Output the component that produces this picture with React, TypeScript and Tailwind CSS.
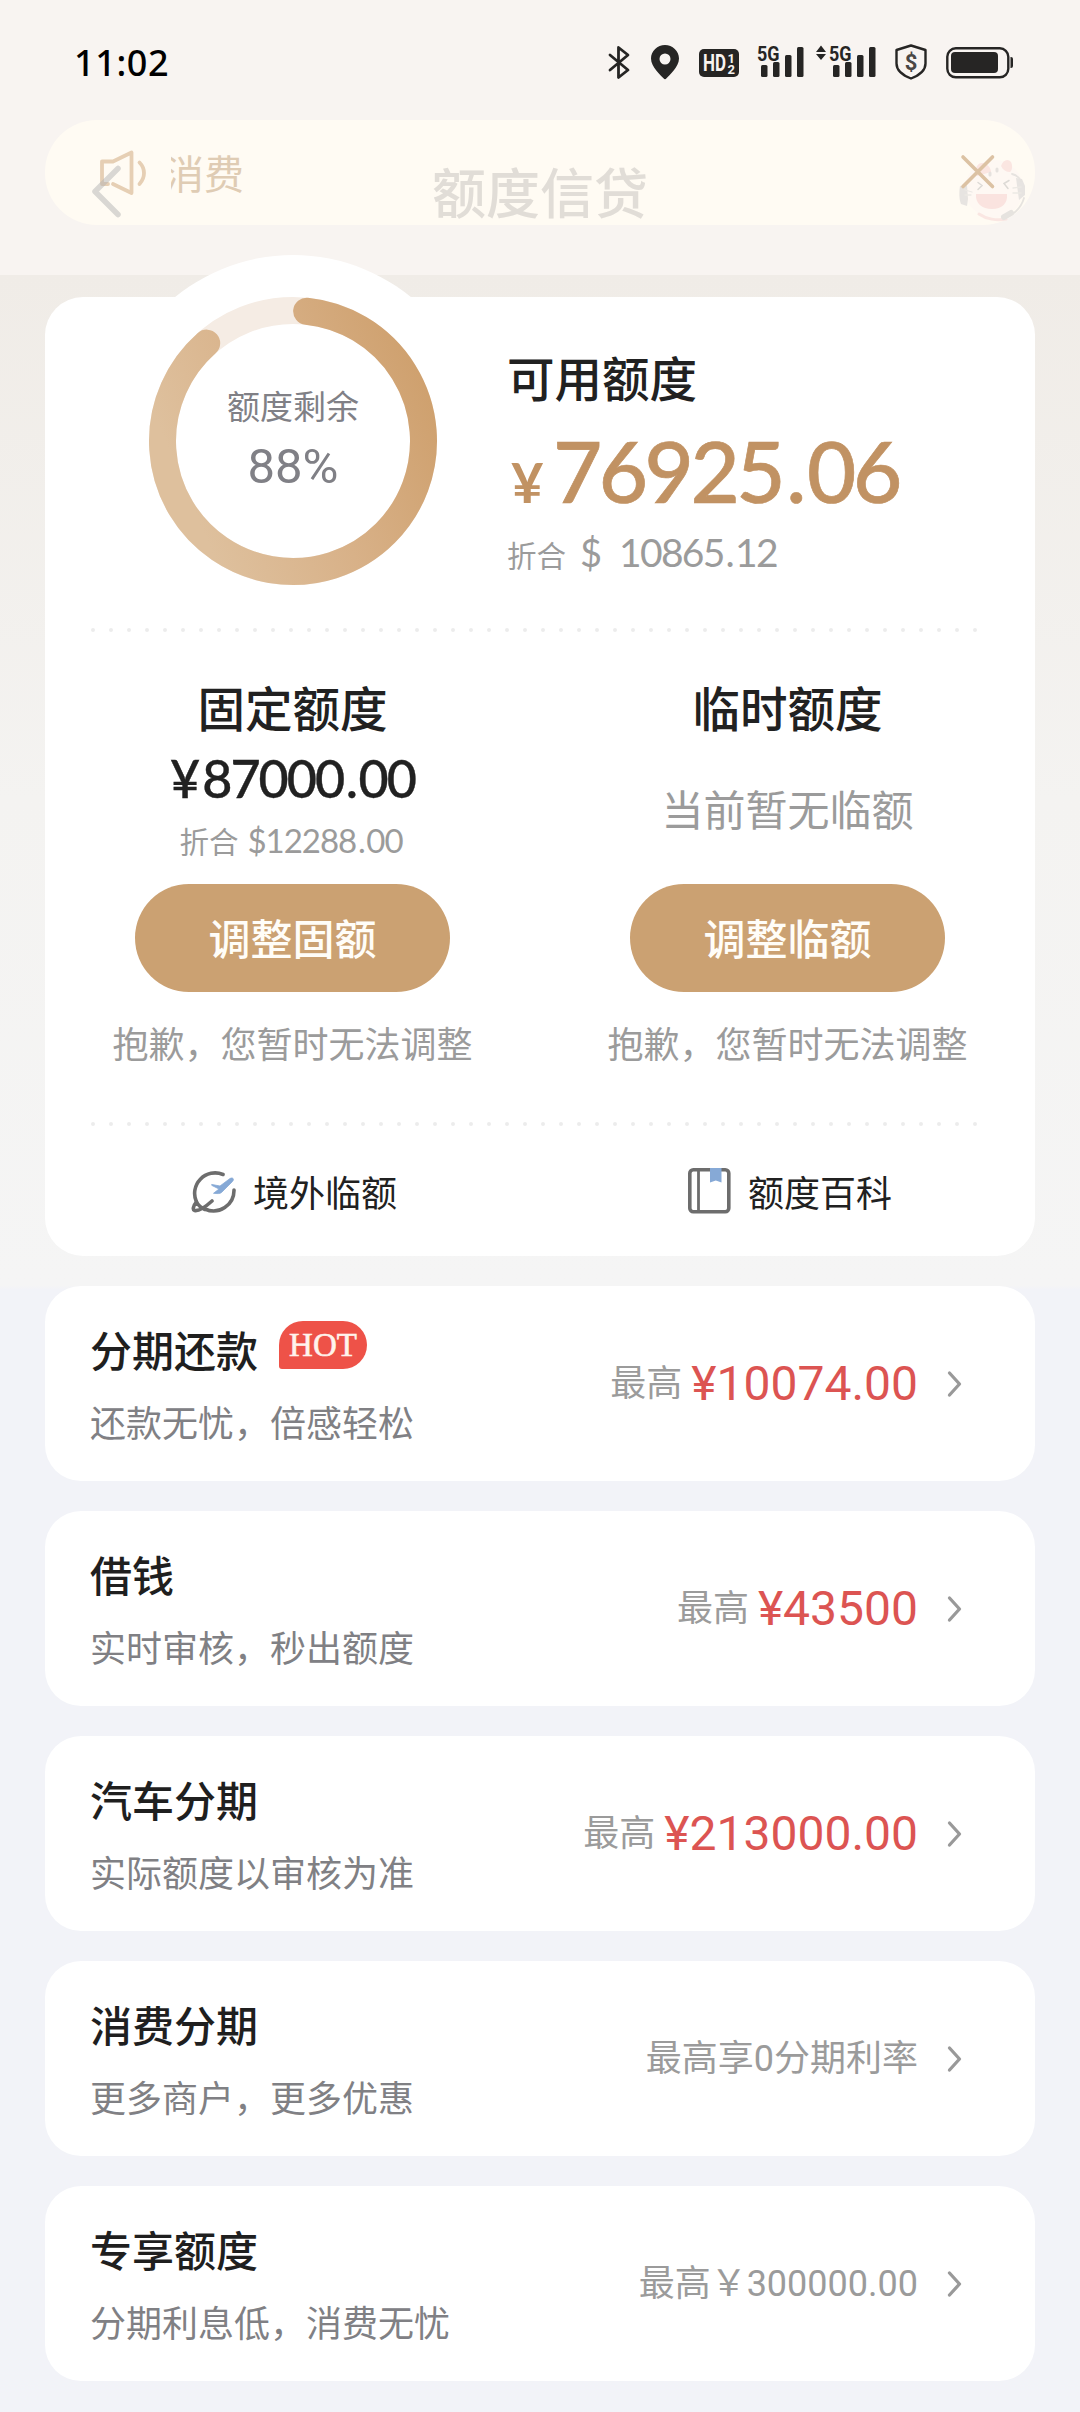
import React from "react";

const CJK = "font-['Noto_Sans_CJK_SC',sans-serif]";
const NUM = "font-['Lato','Noto_Sans_CJK_SC',sans-serif]";
const ROBOTO = "font-['Roboto','Noto_Sans_CJK_SC',sans-serif]";

function SignalBars() {
  return (
    <g fill="#262524">
      <rect x="4" y="21" width="6.500" height="12" rx="1.500" />
      <rect x="16" y="18" width="6.500" height="15" rx="1.500" />
      <rect x="28" y="11" width="6.500" height="22" rx="1.500" />
      <rect x="40" y="3" width="6.500" height="30" rx="1.500" />
      <text x="0" y="16.500" fontFamily="Roboto" fontWeight="700" fontSize="21" textLength="22.500" lengthAdjust="spacingAndGlyphs">
        5G
      </text>
    </g>
  );
}

function StatusBar() {
  return (
    <div className="flex h-[120px] items-start justify-between pl-[74px] pr-[66px] pt-[44px]">
      <div className="font-['Noto_Sans',sans-serif] text-[36px] font-medium leading-[38px] tracking-[.6px] text-black">11:02</div>
      <div className="flex items-start">
        <svg className="h-[36px] w-[22px]" viewBox="0 0 22 36" fill="none" stroke="#262524" strokeWidth="2.800" strokeLinejoin="round" strokeLinecap="round">
          <path d="M2 11 20 26 10.500 33.500V3.500L20 11 2 26" />
        </svg>
        <svg className="ml-[21px] h-[36px] w-[28px]" viewBox="0 0 28 36">
          <path fill="#262524" fillRule="evenodd" d="M14 1C6.500 1 0 7 0 14.500 0 23 10 31.500 12.500 34.300a2 2 0 0 0 3 0C18 31.500 28 23 28 14.500 28 7 21.500 1 14 1Zm0 8.500a5.500 5.500 0 1 1 0 11 5.500 5.500 0 0 1 0-11Z" />
        </svg>
        <svg className="ml-[20px] h-[36px] w-[40px]" viewBox="0 0 40 36">
          <rect x="0" y="5" width="40" height="28" rx="5" fill="#262524" />
          <g fill="#f8f4f1" fontFamily="Roboto" fontWeight="700">
            <text x="4" y="27" fontSize="23" textLength="23" lengthAdjust="spacingAndGlyphs">HD</text>
            <text x="28.500" y="18.500" fontSize="13">1</text>
            <text x="28.500" y="29.500" fontSize="13">2</text>
          </g>
        </svg>
        <svg className="ml-[18px] h-[36px] w-[48px] overflow-visible" viewBox="0 0 48 36">
          <SignalBars />
        </svg>
        <svg className="ml-[11px] h-[36px] w-[61px] overflow-visible" viewBox="0 0 61 36">
          <path d="M5 1.500 10 8H0ZM5 16 0 10H10Z" fill="#262524" />
          <g transform="translate(13 0)">
            <SignalBars />
          </g>
        </svg>
        <svg className="ml-[17px] h-[36px] w-[34px]" viewBox="0 0 34 36">
          <path d="M17 1.500 31.500 6v13.500C31.500 27 26 31 17 34.500 8 31 2.500 27 2.500 19.500V6Z" fill="none" stroke="#262524" strokeWidth="2.400" strokeLinejoin="round" />
          <text x="17" y="25.500" textAnchor="middle" fill="#4a4745" fontFamily="Roboto" fontWeight="700" fontSize="22">$</text>
        </svg>
        <svg className="ml-[18px] h-[36px] w-[68px]" viewBox="0 0 68 36">
          <rect x="1.300" y="4.300" width="61" height="29" rx="8.500" fill="none" stroke="#262524" strokeWidth="2.400" />
          <rect x="5" y="8" width="47" height="21" rx="4" fill="#262524" />
          <path d="M64.500 13h.5a2 2 0 0 1 2 2v7a2 2 0 0 1-2 2h-.5Z" fill="#262524" />
        </svg>
      </div>
    </div>
  );
}

function NoticeBar() {
  return (
    <div className="relative mx-[45px] flex h-[105px] items-start rounded-[52px] bg-[#fffbf3] pl-[53px] pr-[40px]">
      <svg className="mt-[29px] h-[48px] w-[52px]" viewBox="0 0 52 48" fill="none" stroke="#e6cfb4" strokeWidth="3.800" strokeLinecap="round" strokeLinejoin="round">
        <path d="M10 35H4V12.500H15L33.500 3.500V44L15 35" />
        <path d="M41.500 13.500c6 6 6 15 0 21.500" />
      </svg>
      <div className="ml-[21px] mt-[25px] flex w-[73px] justify-end overflow-hidden">
        <span className={`${CJK} whitespace-nowrap text-[40px] leading-[54px] text-[#dfccb4]`}>消费</span>
      </div>
    </div>
  );
}

/** Page title bar that is fading in on top of the notice bar. */
function FadingTitleBar() {
  return (
    <div className="absolute inset-x-0 top-[150px] flex h-[80px] items-center">
      <svg className="ml-[90px] h-[60px] w-[34px]" viewBox="0 0 34 60" fill="none" stroke="#b4b4b4" strokeOpacity=".5" strokeWidth="5.500" strokeLinecap="round" strokeLinejoin="round">
        <path d="M28 8.500 5 31.500 28 54.500" />
      </svg>
      <div className={`${CJK} ml-[308px] whitespace-nowrap pt-[2px] text-[54px] font-medium leading-[80px] text-[#e1ddd7]`}>额度信贷</div>
      <svg className="ml-auto mr-[45px] h-[80px] w-[80px]" viewBox="0 0 80 80" fill="none" strokeLinecap="round">
        <g opacity=".75" transform="translate(0 -2)">
          <circle cx="39" cy="41" r="29" fill="#fdf6f3" fillOpacity=".7" />
          <path d="M22 28c-3-8 1-14 6-13 5 1 8 5 8 9ZM46 18c2-6 7-8 10-4 2 4 1 9-1 10-4 0-7-2-9-6Z" fill="#fadfdc" />
          <path d="M35 25v2M42 21v2" stroke="#dedad8" strokeWidth="3" />
          <path d="M23 34.500l4 3-4 4M54 32.500l-5 3 4 5" stroke="#d2cfcc" strokeWidth="1.500" />
          <path d="M21 46h31c1 9-5 15-15 15S20 55 21 46Z" fill="#f9dbd9" />
          <path d="M24 66c7 5 18 7 27 5" stroke="#f9e0dd" strokeWidth="3" />
          <path d="M5 38l7-1 1 14-1 7-6-2c-2-5-2-12-1-18ZM61 30l6 1 3 7v9l-6 5Z" fill="#e0dddb" />
          <path d="M57 26q6 1 9 7M69 50q-4 14-19 20" stroke="#dedbd9" strokeWidth="1.800" />
          <path d="M10 42l7 2M10 47l6 0M58 40l8-1M58 45h8" stroke="#e6e3e0" strokeWidth="1.300" />
          <path d="M49 69l7-4" stroke="#dedbd9" strokeWidth="6" />
        </g>
        <path d="M8 7 37.500 36.500M37.500 7 8 36.500" stroke="#dcc2a3" strokeWidth="3.600" />
      </svg>
    </div>
  );
}

const RING = 130.5;
const polar = (deg: number): [number, number] => {
  const a = (deg * Math.PI) / 180;
  return [186 + RING * Math.sin(a), 186 - RING * Math.cos(a)];
};
const arc = (from: number, to: number) => {
  const [x1, y1] = polar(from);
  const [x2, y2] = polar(to);
  return `M${x1} ${y1}A${RING} ${RING} 0 ${to - from > 180 ? 1 : 0} 1 ${x2} ${y2}`;
};

function QuotaRing() {
  return (
    <div className="relative -mt-[42px] ml-[62px] h-[372px] w-[372px] shrink-0 rounded-full bg-white">
      <svg className="h-full w-full" viewBox="0 0 372 372" fill="none" strokeWidth="27">
        <defs>
          <linearGradient id="quota" x1="300" y1="90" x2="60" y2="190" gradientUnits="userSpaceOnUse">
            <stop offset="0" stopColor="#cfa16f" />
            <stop offset=".5" stopColor="#d8b188" />
            <stop offset="1" stopColor="#dec09d" />
          </linearGradient>
        </defs>
        <circle cx="186" cy="186" r={RING} stroke="#f5ece4" />
        <path d={arc(6, 318.6)} stroke="url(#quota)" strokeLinecap="round" />
      </svg>
      <div className="absolute inset-0 flex flex-col items-center pt-[126px] text-[#808086]">
        <div className={`${CJK} text-[33px] leading-[48px]`}>额度剩余</div>
        <div className={`${ROBOTO} mt-[10px] text-[49px] leading-[56px]`}>88%</div>
      </div>
    </div>
  );
}

function DottedLine() {
  return (
    <div className="ml-[46px] mr-[58px] flex justify-between">
      {Array.from({ length: 50 }, (_, i) => (
        <span key={i} className="h-[4px] w-[4px] rounded-full bg-[#ececec]" />
      ))}
    </div>
  );
}

/** A number whose decimal point is set with extra room on both sides. */
function Figure({ value }: { value: string }) {
  const [whole, cents] = value.split(".");
  return (
    <>
      {whole}
      <span className="mx-[.05em]">.</span>
      {cents}
    </>
  );
}

function QuotaColumn({ title, button, children }: { title: string; button: string; children: React.ReactNode }) {
  return (
    <div className="flex flex-1 flex-col items-center">
      <div className={`${CJK} pt-px text-[47.5px] font-medium leading-[60px] text-[#212121]`}>{title}</div>
      <div className="flex h-[147px] flex-col items-center">{children}</div>
      <button className={`${CJK} h-[108px] w-[315px] rounded-full bg-[#cba172] pb-[3px] text-[42px] font-medium leading-[60px] text-[#fffdf8]`}>{button}</button>
      <div className={`${CJK} mt-[24px] text-[36px] leading-[52px] text-[#9b9b9b]`}>抱歉，您暂时无法调整</div>
    </div>
  );
}

function QuotaCard() {
  return (
    <section className="mx-[45px] mt-[72px] h-[959px] rounded-[38px] bg-white">
      <div className="flex h-[331px]">
        <QuotaRing />
        <div className="ml-[28px] pt-[52px]">
          <div className={`${CJK} text-[47.5px] font-medium leading-[56px] text-[#212121]`}>可用额度</div>
          <div className={`${NUM} mt-[20px] flex h-[90px] items-baseline text-[#c19263]`}>
            <span className="ml-[4px] w-[42px] text-[56px] font-bold leading-[90px]">¥</span>
            <span className="text-[85px] font-medium leading-[90px] tracking-[-3.500px] [-webkit-text-stroke:.7px_#c19263]">
              <Figure value="76925.06" />
            </span>
          </div>
          <div className="mt-[12px] flex h-[50px] items-baseline text-[#9b9b9b]">
            <span className={`${CJK} text-[29.5px] leading-[50px]`}>折合</span>
            <span className={`${NUM} ml-[14px] text-[38px] leading-[50px]`}>$</span>
            <span className={`${NUM} ml-[17px] text-[39px] leading-[50px] tracking-[-1.700px]`}>
              <Figure value="10865.12" />
            </span>
          </div>
        </div>
      </div>
      <DottedLine />
      <div className="flex pt-[44px]">
        <QuotaColumn title="固定额度" button="调整固额">
          <div className={`${NUM} mt-[11px] whitespace-nowrap text-[52px] font-medium leading-[60px] tracking-[-2px] text-[#212121] [-webkit-text-stroke:.4px_#212121]`}>
            <span className="mr-[4px]">¥</span>
            <Figure value="87000.00" />
          </div>
          <div className="-ml-[3px] mt-[10px] flex h-[44px] items-baseline text-[#9b9b9b]">
            <span className={`${CJK} text-[29.5px] leading-[44px]`}>折合</span>
            <span className={`${NUM} ml-[9px] text-[33px] leading-[44px] tracking-[-1px]`}>
              <Figure value="$12288.00" />
            </span>
          </div>
        </QuotaColumn>
        <QuotaColumn title="临时额度" button="调整临额">
          <div className={`${CJK} mt-[41px] text-[42px] leading-[60px] text-[#9b9b9b]`}>当前暂无临额</div>
        </QuotaColumn>
      </div>
      <div className="mt-[54px]">
        <DottedLine />
      </div>
      <div className={`${CJK} mt-[35px] flex text-[36px] leading-[60px] text-[#212121]`}>
        <div className="flex flex-1 items-center justify-center gap-[16px] pl-[4px]">
          <svg className="h-[46px] w-[46px]" viewBox="0 0 46 46" fill="none" stroke="#6d6d6d" strokeWidth="3.600" strokeLinecap="round" strokeLinejoin="round">
            <path d="M32 6.500A20.500 20.500 0 0 0 5.500 34M43 22A20.500 20.500 0 0 1 14 41" />
            <path d="M5.500 34C2 38 1.500 42 3.500 42.500 8 43.500 16 37.500 21 33M5.500 34c2 4 5 6 8.500 7.500" />
            <path d="M21 16.500l8 1.500L39 10.500c3-1.500 4.500.8 2.500 3L31 24c-2 2.300-5 1.500-8.500 1.300l5.500-4.300-7-3.500Z" fill="#86a9d6" stroke="#86a9d6" strokeWidth=".8" />
          </svg>
          <span>境外临额</span>
        </div>
        <div className="flex flex-1 items-center justify-center gap-[17px] pl-[6px]">
          <svg className="h-[46px] w-[43px]" viewBox="0 0 43 46" fill="none">
            <rect x="1.800" y="1.800" width="39" height="42" rx="3.500" stroke="#6d6d6d" strokeWidth="3.600" />
            <path d="M10.500 2v42" stroke="#6d6d6d" strokeWidth="2.800" />
            <path d="M22 0H33.500V14.500L27.800 12.500 22 14.500Z" fill="#86a9d6" />
          </svg>
          <span>额度百科</span>
        </div>
      </div>
    </section>
  );
}

function HotBadge() {
  return (
    <span className="ml-[21px] mt-[3px] h-[48px] w-[88px] rounded-[24px] rounded-bl-[3px] bg-[#ee5248] text-center font-['Liberation_Serif',serif] text-[33px] leading-[49px] text-[#fff3ec] [-webkit-text-stroke:.6px_#fff3ec]">
      HOT
    </span>
  );
}

type Item = { title: string; desc: string; hot?: boolean; note: string; amount?: string };

const items: Item[] = [
  { title: "分期还款", desc: "还款无忧，倍感轻松", hot: true, note: "最高", amount: "¥10074.00" },
  { title: "借钱", desc: "实时审核，秒出额度", note: "最高", amount: "¥43500" },
  { title: "汽车分期", desc: "实际额度以审核为准", note: "最高", amount: "¥213000.00" },
  { title: "消费分期", desc: "更多商户，更多优惠", note: "最高享0分期利率" },
  { title: "专享额度", desc: "分期利息低，消费无忧", note: "最高￥300000.00" },
];

function ProductItem({ title, desc, hot, note, amount }: Item) {
  return (
    <li className="flex h-[195px] items-center justify-between rounded-[36px] bg-white pl-[45px] pr-[71px]">
      <div className="flex h-full flex-col pt-[32px]">
        <div className="flex h-[62px] items-start">
          <span className={`${CJK} text-[42px] font-medium leading-[62px] text-[#1f1f1f]`}>{title}</span>
          {hot && <HotBadge />}
        </div>
        <span className={`${CJK} mt-[15px] text-[36px] leading-[52px] text-[#808084]`}>{desc}</span>
      </div>
      <div className="flex h-[60px] items-center">
        <div className="flex items-center whitespace-nowrap">
          <span className={`${ROBOTO} text-[36px] leading-[60px] text-[#9b9b9b]`}>{note}</span>
          {amount && <span className={`${ROBOTO} ml-[9px] text-[48px] leading-[60px] text-[#dc5452]`}>{amount}</span>}
        </div>
        <svg className="ml-[28px] h-[30px] w-[18px]" viewBox="0 0 18 30" fill="none" stroke="#999" strokeWidth="3.300" strokeLinecap="round" strokeLinejoin="round">
          <path d="M3.500 4 13.500 15 3.500 26" />
        </svg>
      </div>
    </li>
  );
}

export default function App() {
  return (
    <div className="relative h-[2412px] w-[1080px] overflow-hidden bg-[linear-gradient(#f8f4f1_275px,#f0ece7_275px,#f4f3f1_800px,#f5f5f5_1285px,#f2f3f8_1290px)]">
      <StatusBar />
      <NoticeBar />
      <FadingTitleBar />
      <QuotaCard />
      <ul className="mx-[45px] mt-[30px] flex flex-col gap-[30px]">
        {items.map((item) => (
          <ProductItem key={item.title} {...item} />
        ))}
      </ul>
    </div>
  );
}
